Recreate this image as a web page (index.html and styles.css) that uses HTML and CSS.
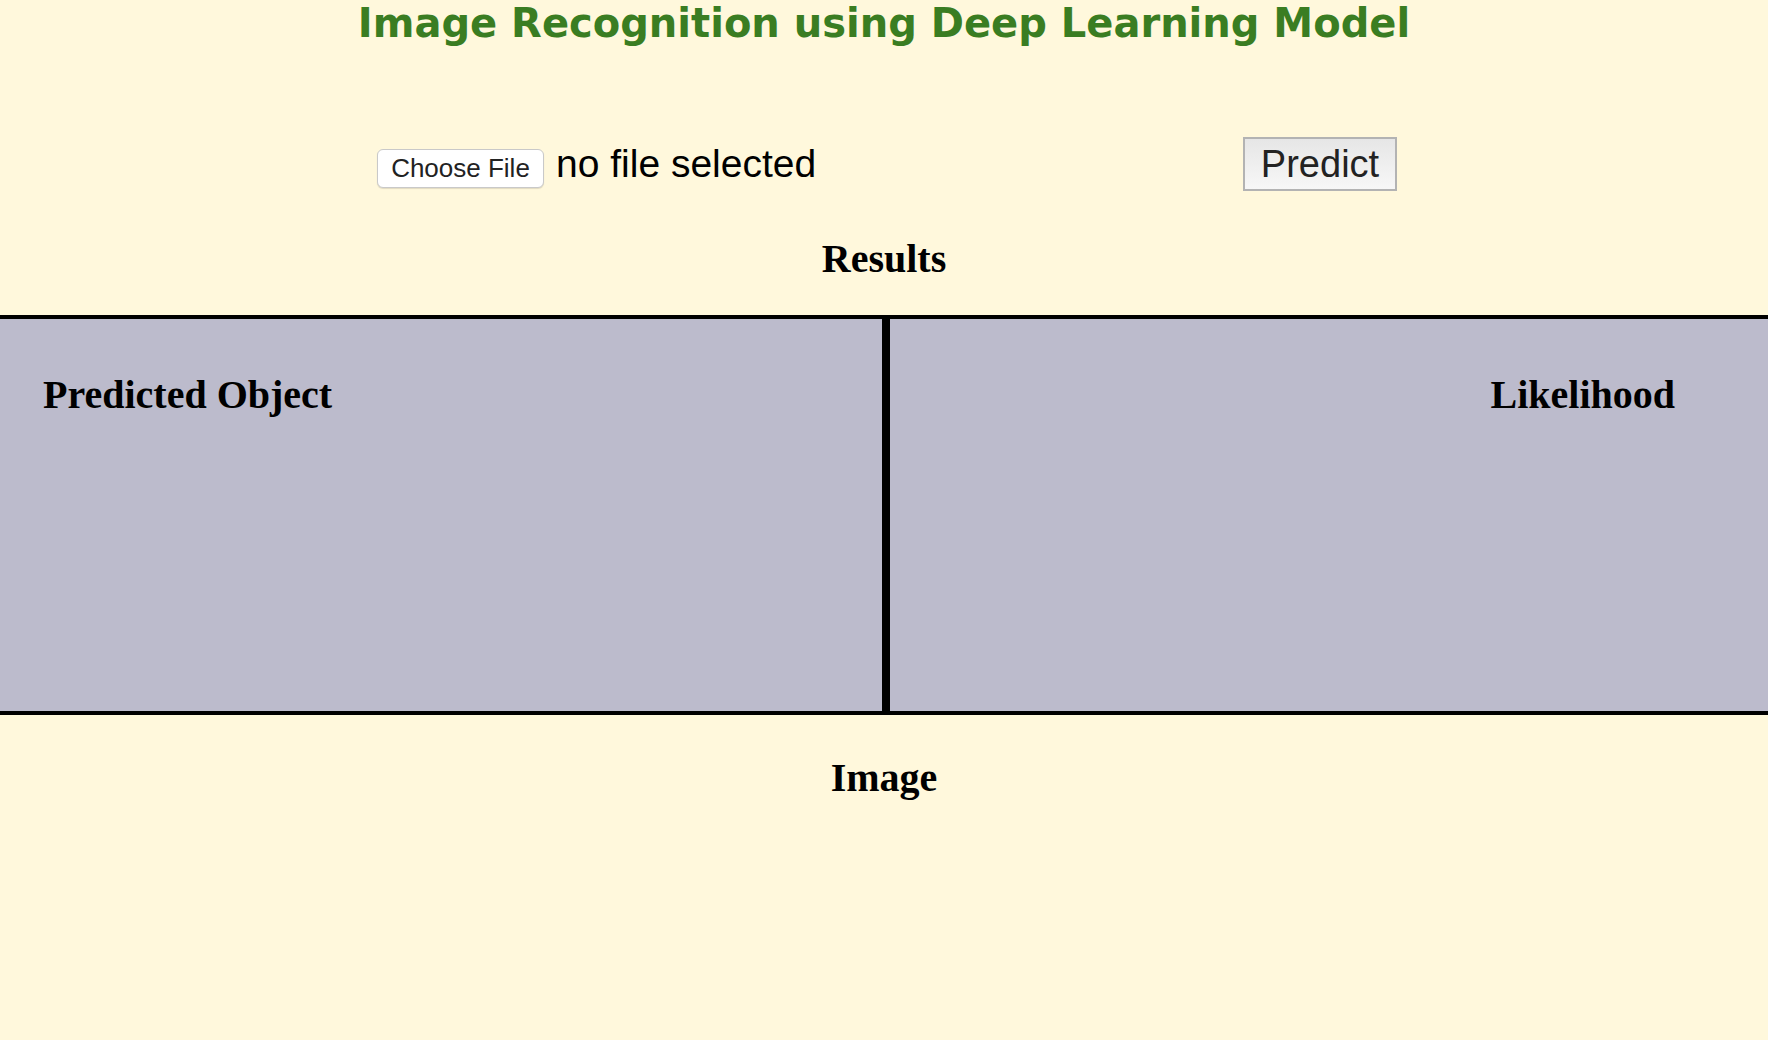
FILE: index.html
```html
<!DOCTYPE html>
<html lang="en">
<head>
<meta charset="utf-8">
<title>Image Recognition</title>
<link rel="stylesheet" href="styles.css">
</head>
<body>
<h1 class="title">Image Recognition using Deep Learning Model</h1>
<div class="controls">
  <div class="file-group">
    <button class="file-btn" type="button">Choose File</button>
    <span class="file-label">no file selected</span>
  </div>
  <button class="predict-btn" type="button">Predict</button>
</div>
<h2 class="section-head results-head">Results</h2>
<div class="results">
  <div class="cell cell-left"><h2 class="cell-head">Predicted Object</h2></div>
  <div class="cell cell-right"><h2 class="cell-head">Likelihood</h2></div>
</div>
<h2 class="section-head image-head">Image</h2>
</body>
</html>
```
FILE: styles.css
```css
html, body {
  margin: 0;
  padding: 0;
}
body {
  background: #fff8dc;
  min-height: 1040px;
  font-family: "Liberation Serif", "Times New Roman", serif;
}
.title {
  margin: 0;
  font-family: "DejaVu Sans", Verdana, sans-serif;
  font-weight: bold;
  font-size: 40px;
  line-height: 46px;
  color: #3a7d22;
  text-align: center;
}
.controls {
  width: 1026px;
  margin: 91px auto 0;
  padding-left: 6px;
  box-sizing: border-box;
  display: flex;
  align-items: baseline;
  justify-content: space-between;
}
.file-group {
  display: flex;
  align-items: baseline;
  gap: 12px;
}
.file-btn {
  box-sizing: border-box;
  height: 39px;
  width: 167px;
  padding: 0;
  border: 1px solid #c9c9c9;
  border-radius: 6px;
  background: #ffffff;
  box-shadow: 0 1px 1px rgba(0, 0, 0, 0.12);
  font-family: "Liberation Sans", Arial, sans-serif;
  font-size: 26px;
  line-height: 37px;
  color: #222222;
}
.file-label {
  font-family: "Liberation Sans", Arial, sans-serif;
  font-size: 39px;
  color: #000000;
}
.predict-btn {
  box-sizing: border-box;
  height: 54px;
  width: 154px;
  padding: 0;
  border: 2px solid #b3b3b3;
  border-radius: 0;
  background: linear-gradient(#e6e6e6, #f7f7f7);
  font-family: "Liberation Sans", Arial, sans-serif;
  font-size: 38px;
  line-height: 50px;
  color: #222222;
}
.section-head {
  margin: 0;
  font-size: 40px;
  line-height: 46px;
  font-weight: bold;
  text-align: center;
  color: #000000;
}
.results-head {
  margin-top: 45px;
}
.results {
  margin-top: 33px;
  height: 400px;
  box-sizing: border-box;
  border-top: 4px solid #000000;
  border-bottom: 4px solid #000000;
  display: grid;
  grid-template-columns: 886px 1fr;
  background: #bcbbcc;
}
.cell {
  padding-top: 53px;
}
.cell-left {
  border-right: 4px solid #000000;
  padding-left: 43px;
}
.cell-right {
  border-left: 4px solid #000000;
  text-align: right;
  padding-right: 93px;
}
.cell-head {
  margin: 0;
  font-size: 40px;
  line-height: 46px;
  font-weight: bold;
  color: #000000;
}
.image-head {
  margin-top: 40px;
}
```
